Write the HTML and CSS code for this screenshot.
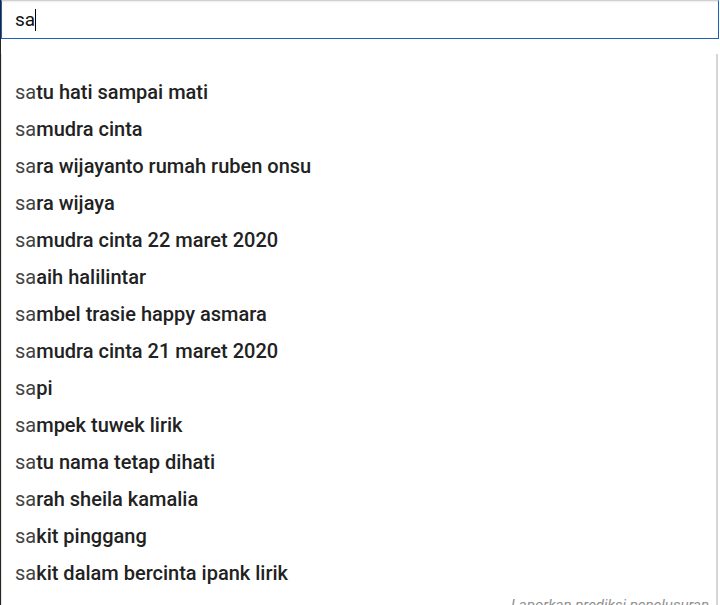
FILE: index.html
```html
<!DOCTYPE html>
<html>
<head>
<meta charset="utf-8">
<link rel="stylesheet" href="styles.css">
</head>
<body>
<div class="page">
  <div class="search">
    <span class="query">sa</span><span class="caret"></span>
  </div>
  <div class="dropdown">
    <ul class="list">
      <li><span class="pre">sa</span>tu hati sampai mati</li>
      <li><span class="pre">sa</span>mudra cinta</li>
      <li><span class="pre">sa</span>ra wijayanto rumah ruben onsu</li>
      <li><span class="pre">sa</span>ra wijaya</li>
      <li><span class="pre">sa</span>mudra cinta 22 maret 2020</li>
      <li><span class="pre">sa</span>aih halilintar</li>
      <li><span class="pre">sa</span>mbel trasie happy asmara</li>
      <li><span class="pre">sa</span>mudra cinta 21 maret 2020</li>
      <li><span class="pre">sa</span>pi</li>
      <li><span class="pre">sa</span>mpek tuwek lirik</li>
      <li><span class="pre">sa</span>tu nama tetap dihati</li>
      <li><span class="pre">sa</span>rah sheila kamalia</li>
      <li><span class="pre">sa</span>kit pinggang</li>
      <li><span class="pre">sa</span>kit dalam bercinta ipank lirik</li>
    </ul>
    <div class="report">Laporkan prediksi penelusuran</div>
  </div>
</div>
</body>
</html>
```
FILE: styles.css
```css
html, body {
  margin: 0;
  padding: 0;
  background: #ffffff;
  overflow: hidden;
}
.page {
  width: 720px;
  height: 605px;
  font-family: Roboto, "Liberation Sans", sans-serif;
  color: #030303;
  background: linear-gradient(to right, #2a2520 0, #2a2520 1px, #ffffff 1px);
}
.search {
  margin-left: 1px;
  height: 37px;
  border: 1px solid #1c62b9;
  border-top-color: #d0d0d0;
  background: #fff;
  box-shadow: inset 0 1px 2px rgba(0,0,0,0.08);
  display: flex;
  align-items: center;
  padding-left: 13px;
  box-sizing: content-box;
  width: 703px;
}
.query {
  font-size: 19px;
  color: #111;
  line-height: 20px;
}
.caret {
  display: inline-block;
  width: 1px;
  height: 22px;
  background: #000;
}
.dropdown {
  margin-top: 15px;
  margin-left: 1px;
  width: 717px;
  height: 552px;
  background: #fff;
  border-left: 1px solid #e4e4e4;
  border-right: 2px solid #d6d6d6;
  padding-top: 20px;
  box-sizing: border-box;
}
.list {
  list-style: none;
  margin: 0;
  padding: 0;
}
.list li {
  height: 37px;
  line-height: 37px;
  padding-left: 13px;
  font-size: 20px;
  font-weight: 500;
  color: #222;
  white-space: nowrap;
}
.pre {
  font-weight: 400;
  color: #444;
}
.report {
  text-align: right;
  padding-right: 7px;
  margin-top: 4px;
  font-size: 15px;
  line-height: 18px;
  font-style: italic;
  color: #909090;
}
```
